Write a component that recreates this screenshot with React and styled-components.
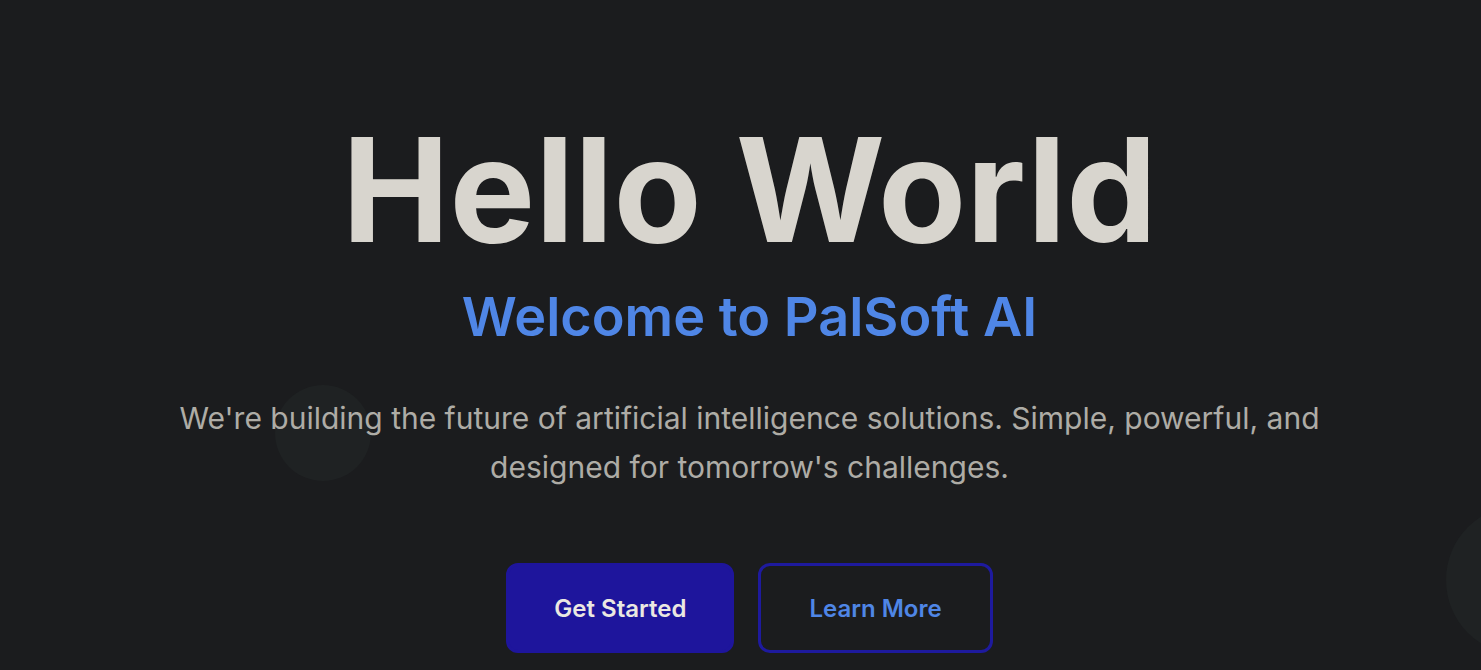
import React from 'react';
import styled, { createGlobalStyle } from 'styled-components';

const GlobalStyle = createGlobalStyle`
  html, body {
    margin: 0;
    padding: 0;
    background: #1b1c1e;
    font-family: Inter, "Noto Sans", sans-serif;
  }
`;

const Hero = styled.section`
  position: relative;
  overflow: hidden;
  height: 670px;
  background: #1b1c1e;
  display: flex;
  flex-direction: column;
  align-items: center;
  padding-left: 18px;
  box-sizing: border-box;
`;

const Bubble = styled.div`
  position: absolute;
  border-radius: 50%;
  background: #1f2223;
  width: ${(p) => p.size}px;
  height: ${(p) => p.size}px;
  left: ${(p) => p.x}px;
  top: ${(p) => p.y}px;
`;

const Content = styled.div`
  position: relative;
  display: flex;
  flex-direction: column;
  align-items: center;
  text-align: center;
  padding-top: 111px;
`;

const Title = styled.h1`
  margin: 0;
  font-size: 144px;
  font-weight: 700;
  line-height: 1.1;
  color: #d8d5ce;
`;

const Subtitle = styled.h2`
  margin: 16px 0 0;
  font-size: 54px;
  font-weight: 600;
  line-height: 1.2;
  color: #4f86e6;
`;

const Text = styled.p`
  margin: 44px 0 0;
  max-width: 1200px;
  font-size: 30px;
  font-weight: 400;
  line-height: 49px;
  color: #aeaca6;
`;

const Actions = styled.div`
  display: flex;
  gap: 24px;
  margin-top: 71px;
`;

const Button = styled.button`
  box-sizing: border-box;
  height: 90px;
  padding: 0 ${(p) => (p.outline ? 48 : 45)}px;
  border-radius: 12px;
  border: 3px solid ${(p) => (p.outline ? '#1e1a9e' : '#1e159c')};
  background: ${(p) => (p.outline ? 'transparent' : '#1e159c')};
  color: ${(p) => (p.outline ? '#4f86e6' : '#ebe8e2')};
  font-family: Inter, sans-serif;
  font-size: 24px;
  font-weight: 600;
  cursor: pointer;
`;

export default function App() {
  return (
    <>
      <GlobalStyle />
      <Hero>
        <Bubble size={96} x={275} y={385} />
        <Bubble size={150} x={1446} y={505} />
        <Content>
          <Title>Hello World</Title>
          <Subtitle>Welcome to PalSoft AI</Subtitle>
          <Text>
            We're building the future of artificial intelligence solutions. Simple, powerful, and
            designed for tomorrow's challenges.
          </Text>
          <Actions>
            <Button>Get Started</Button>
            <Button outline>Learn More</Button>
          </Actions>
        </Content>
      </Hero>
    </>
  );
}
